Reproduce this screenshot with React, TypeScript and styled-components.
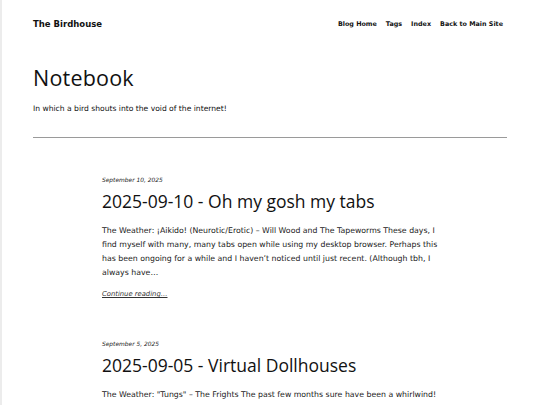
import React from 'react'
import styled, { createGlobalStyle } from 'styled-components'

const GlobalStyle = createGlobalStyle`
  html, body {
    margin: 0;
    padding: 0;
    background: #ffffff;
  }
  body {
    font-family: "DejaVu Sans", "Noto Sans", sans-serif;
    color: #111111;
  }
`

const Page = styled.div`
  height: 405px;
  overflow: hidden;
  border-left: 2px solid #ececec;
  box-sizing: border-box;
`

const Header = styled.header`
  display: flex;
  align-items: center;
  justify-content: space-between;
  padding: 17px 37px 0 31px;
  height: 14px;
`

const SiteTitle = styled.a`
  font-size: 8.5px;
  font-weight: 700;
  color: #111;
  text-decoration: none;
`

const Nav = styled.nav`
  display: flex;
  gap: 9px;
`

const NavLink = styled.a`
  font-size: 6.4px;
  font-weight: 700;
  color: #111;
  text-decoration: none;
`

const Intro = styled.section`
  padding: 0 33px 0 31px;
`

const PageTitle = styled.h1`
  margin: 33px 0 0;
  font-family: "Open Sans", sans-serif;
  font-size: 21.5px;
  font-weight: 400;
  line-height: 28px;
  letter-spacing: 0.2px;
`

const Tagline = styled.p`
  margin: 12px 0 0;
  font-size: 7.6px;
  line-height: 10px;
`

const Rule = styled.hr`
  margin: 23px 0 0;
  border: none;
  border-top: 1px solid #9a9a9a;
  height: 0;
`

const Feed = styled.main`
  padding: 38px 0 0 100px;
  width: 342px;
  display: flex;
  flex-direction: column;
  gap: 41px;
`

const Post = styled.article`
  display: flex;
  flex-direction: column;
`

const PostDate = styled.time`
  font-size: 5.9px;
  font-style: italic;
  line-height: 8px;
  color: #222;
`

const PostTitle = styled.h2`
  margin: 5px 0 0;
  font-family: "Open Sans", sans-serif;
  font-size: 17.5px;
  font-weight: 400;
  line-height: 24px;
`

const Excerpt = styled.p`
  margin: 11px 0 0;
  font-size: 7.8px;
  line-height: 14px;
  color: #1a1a1a;
`

const More = styled.a`
  margin-top: 9px;
  font-size: 6.8px;
  font-style: italic;
  color: #333;
  text-decoration: underline;
  line-height: 10px;
`

const posts = [
  {
    date: 'September 10, 2025',
    title: '2025-09-10 - Oh my gosh my tabs',
    excerpt:
      'The Weather: ¡Aikido! (Neurotic/Erotic) – Will Wood and The Tapeworms These days, I find myself with many, many tabs open while using my desktop browser. Perhaps this has been ongoing for a while and I haven’t noticed until just recent. (Although tbh, I always have…',
  },
  {
    date: 'September 5, 2025',
    title: '2025-09-05 - Virtual Dollhouses',
    excerpt:
      'The Weather: "Tungs" – The Frights The past few months sure have been a whirlwind! Through it all, the lovely and the not-so-lovely, it has all been worth it and still so much more to say…',
  },
]

const App: React.FC = () => {
  return (
    <Page>
      <GlobalStyle />
      <Header>
        <SiteTitle href="#">The Birdhouse</SiteTitle>
        <Nav>
          <NavLink href="#">Blog Home</NavLink>
          <NavLink href="#">Tags</NavLink>
          <NavLink href="#">Index</NavLink>
          <NavLink href="#">Back to Main Site</NavLink>
        </Nav>
      </Header>
      <Intro>
        <PageTitle>Notebook</PageTitle>
        <Tagline>In which a bird shouts into the void of the internet!</Tagline>
        <Rule />
      </Intro>
      <Feed>
        {posts.map((post) => (
          <Post key={post.title}>
            <PostDate>{post.date}</PostDate>
            <PostTitle>{post.title}</PostTitle>
            <Excerpt>{post.excerpt}</Excerpt>
            <More href="#">Continue reading…</More>
          </Post>
        ))}
      </Feed>
    </Page>
  )
}

export default App
